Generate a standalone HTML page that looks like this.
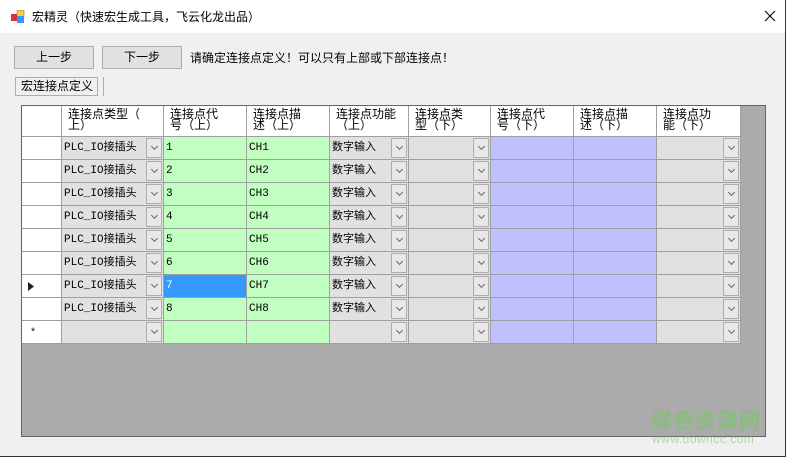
<!DOCTYPE html>
<html><head><meta charset="utf-8"><style>
*{margin:0;padding:0;box-sizing:border-box}
body{width:786px;height:457px;background:#f0f0f0;font-family:"Liberation Sans","Noto Sans CJK SC",sans-serif;font-size:12px;color:#000;position:relative;overflow:hidden}
.title{position:absolute;left:0;top:0;width:786px;height:33px;background:#fff}
.title span{position:absolute;left:32px;top:8px;font-size:12px}
.btn{position:absolute;top:46px;height:23px;background:#e1e1e1;border:1px solid #adadad;text-align:center;line-height:21px}
.grid{position:absolute;left:21px;top:105px;width:745px;height:332px;background:#ababab;border:1px solid #646464}
.row{display:flex;height:23px}
.row.h{height:31px}
.c{height:23px;border-right:1px solid #a0a0a0;border-bottom:1px solid #a0a0a0;position:relative;white-space:nowrap;overflow:hidden;padding-left:2px;padding-top:4px;line-height:14px;font-family:"Liberation Mono","Noto Sans CJK SC",monospace;font-size:11px}
.h .c{height:31px;background:#fff;line-height:11px;padding:3px 0 0 6px;font-family:"Liberation Sans","Noto Sans CJK SC",sans-serif;font-size:12px}
.w0{width:40px;background:#fff}.w1{width:102px}.w2{width:83px}.w3{width:83px}.w4{width:79px}.w5{width:82px}.w6{width:83px}.w7{width:83px}.w8{width:84px}
.cb{background:#e1e1e1}.g{background:#c0ffc0}.p{background:#c0c0ff}
.dd{position:absolute;right:1px;top:1px;width:16px;height:20px;border:1px solid #adadad;background:#e8e8e8}
.dd:after{content:"";position:absolute;left:5px;top:5px;width:4px;height:4px;border-right:1px solid #666;border-bottom:1px solid #666;transform:rotate(45deg)}
.sel{background:#3399ff;color:#fff}
</style></head><body>
<div class="title"><svg style="position:absolute;left:11px;top:10px" width="14" height="14"><rect x="0" y="4" width="7" height="7" fill="#d33"/><rect x="6" y="0" width="7" height="7" fill="#fc3" stroke="#666" stroke-width=".5"/><rect x="6" y="6" width="7" height="7" fill="#39f"/></svg><span>宏精灵（快速宏生成工具，飞云化龙出品）</span>
<svg style="position:absolute;left:764px;top:10px" width="12" height="12"><path d="M1 1L11 11M11 1L1 11" stroke="#000" stroke-width="1.1"/></svg></div>
<div class="btn" style="left:14px;width:80px">上一步</div>
<div class="btn" style="left:102px;width:80px">下一步</div>
<div style="position:absolute;left:190px;top:49px">请确定连接点定义！可以只有上部或下部连接点！</div>
<div style="position:absolute;left:15px;top:77px;width:83px;height:19px;border:1px solid #adadad;background:#f0f0f0;line-height:17px;padding-left:5px">宏连接点定义</div>
<div style="position:absolute;left:103px;top:77px;width:1px;height:19px;background:#adadad"></div>
<div class="grid">
<div class="row h"><div class="c w0"></div><div class="c w1">连接点类型（<br>上）</div><div class="c w2">连接点代<br>号（上）</div><div class="c w3">连接点描<br>述（上）</div><div class="c w4">连接点功能<br>（上）</div><div class="c w5">连接点类<br>型（下）</div><div class="c w6">连接点代<br>号（下）</div><div class="c w7">连接点描<br>述（下）</div><div class="c w8">连接点功<br>能（下）</div></div>
<div class="row"><div class="c w0"></div><div class="c w1 cb">PLC_IO接插头<i class="dd"></i></div><div class="c w2 g">1</div><div class="c w3 g">CH1</div><div class="c w4 cb">数字输入<i class="dd"></i></div><div class="c w5 cb"><i class="dd"></i></div><div class="c w6 p"></div><div class="c w7 p"></div><div class="c w8 cb"><i class="dd"></i></div></div>
<div class="row"><div class="c w0"></div><div class="c w1 cb">PLC_IO接插头<i class="dd"></i></div><div class="c w2 g">2</div><div class="c w3 g">CH2</div><div class="c w4 cb">数字输入<i class="dd"></i></div><div class="c w5 cb"><i class="dd"></i></div><div class="c w6 p"></div><div class="c w7 p"></div><div class="c w8 cb"><i class="dd"></i></div></div>
<div class="row"><div class="c w0"></div><div class="c w1 cb">PLC_IO接插头<i class="dd"></i></div><div class="c w2 g">3</div><div class="c w3 g">CH3</div><div class="c w4 cb">数字输入<i class="dd"></i></div><div class="c w5 cb"><i class="dd"></i></div><div class="c w6 p"></div><div class="c w7 p"></div><div class="c w8 cb"><i class="dd"></i></div></div>
<div class="row"><div class="c w0"></div><div class="c w1 cb">PLC_IO接插头<i class="dd"></i></div><div class="c w2 g">4</div><div class="c w3 g">CH4</div><div class="c w4 cb">数字输入<i class="dd"></i></div><div class="c w5 cb"><i class="dd"></i></div><div class="c w6 p"></div><div class="c w7 p"></div><div class="c w8 cb"><i class="dd"></i></div></div>
<div class="row"><div class="c w0"></div><div class="c w1 cb">PLC_IO接插头<i class="dd"></i></div><div class="c w2 g">5</div><div class="c w3 g">CH5</div><div class="c w4 cb">数字输入<i class="dd"></i></div><div class="c w5 cb"><i class="dd"></i></div><div class="c w6 p"></div><div class="c w7 p"></div><div class="c w8 cb"><i class="dd"></i></div></div>
<div class="row"><div class="c w0"></div><div class="c w1 cb">PLC_IO接插头<i class="dd"></i></div><div class="c w2 g">6</div><div class="c w3 g">CH6</div><div class="c w4 cb">数字输入<i class="dd"></i></div><div class="c w5 cb"><i class="dd"></i></div><div class="c w6 p"></div><div class="c w7 p"></div><div class="c w8 cb"><i class="dd"></i></div></div>
<div class="row"><div class="c w0"><svg style="position:absolute;left:6px;top:7px" width="6" height="9"><path d="M0 0L6 4.5L0 9Z" fill="#222"/></svg></div><div class="c w1 cb">PLC_IO接插头<i class="dd"></i></div><div class="c w2 sel">7</div><div class="c w3 g">CH7</div><div class="c w4 cb">数字输入<i class="dd"></i></div><div class="c w5 cb"><i class="dd"></i></div><div class="c w6 p"></div><div class="c w7 p"></div><div class="c w8 cb"><i class="dd"></i></div></div>
<div class="row"><div class="c w0"></div><div class="c w1 cb">PLC_IO接插头<i class="dd"></i></div><div class="c w2 g">8</div><div class="c w3 g">CH8</div><div class="c w4 cb">数字输入<i class="dd"></i></div><div class="c w5 cb"><i class="dd"></i></div><div class="c w6 p"></div><div class="c w7 p"></div><div class="c w8 cb"><i class="dd"></i></div></div>
<div class="row"><div class="c w0"><span style="position:absolute;left:8px;top:6px;font-size:10px">*</span></div><div class="c w1 cb"><i class="dd"></i></div><div class="c w2 g"></div><div class="c w3 g"></div><div class="c w4 cb"><i class="dd"></i></div><div class="c w5 cb"><i class="dd"></i></div><div class="c w6 p"></div><div class="c w7 p"></div><div class="c w8 cb"><i class="dd"></i></div></div>
</div>
<div style="position:absolute;left:651px;top:408px;font-size:21px;font-weight:bold;color:#7cc46a;opacity:.7;letter-spacing:1px;font-family:'Noto Sans CJK SC',sans-serif;line-height:24px">绿色资源网</div>
<div style="position:absolute;left:652px;top:433px;font-size:12px;color:#8fd07c;opacity:.7;line-height:13px;letter-spacing:.5px">www.downcc.com</div>
<div style="position:absolute;right:0;top:0;width:1px;height:457px;background:#333"></div>
<div style="position:absolute;left:0;bottom:0;width:786px;height:1px;background:#333"></div>
</body></html>
